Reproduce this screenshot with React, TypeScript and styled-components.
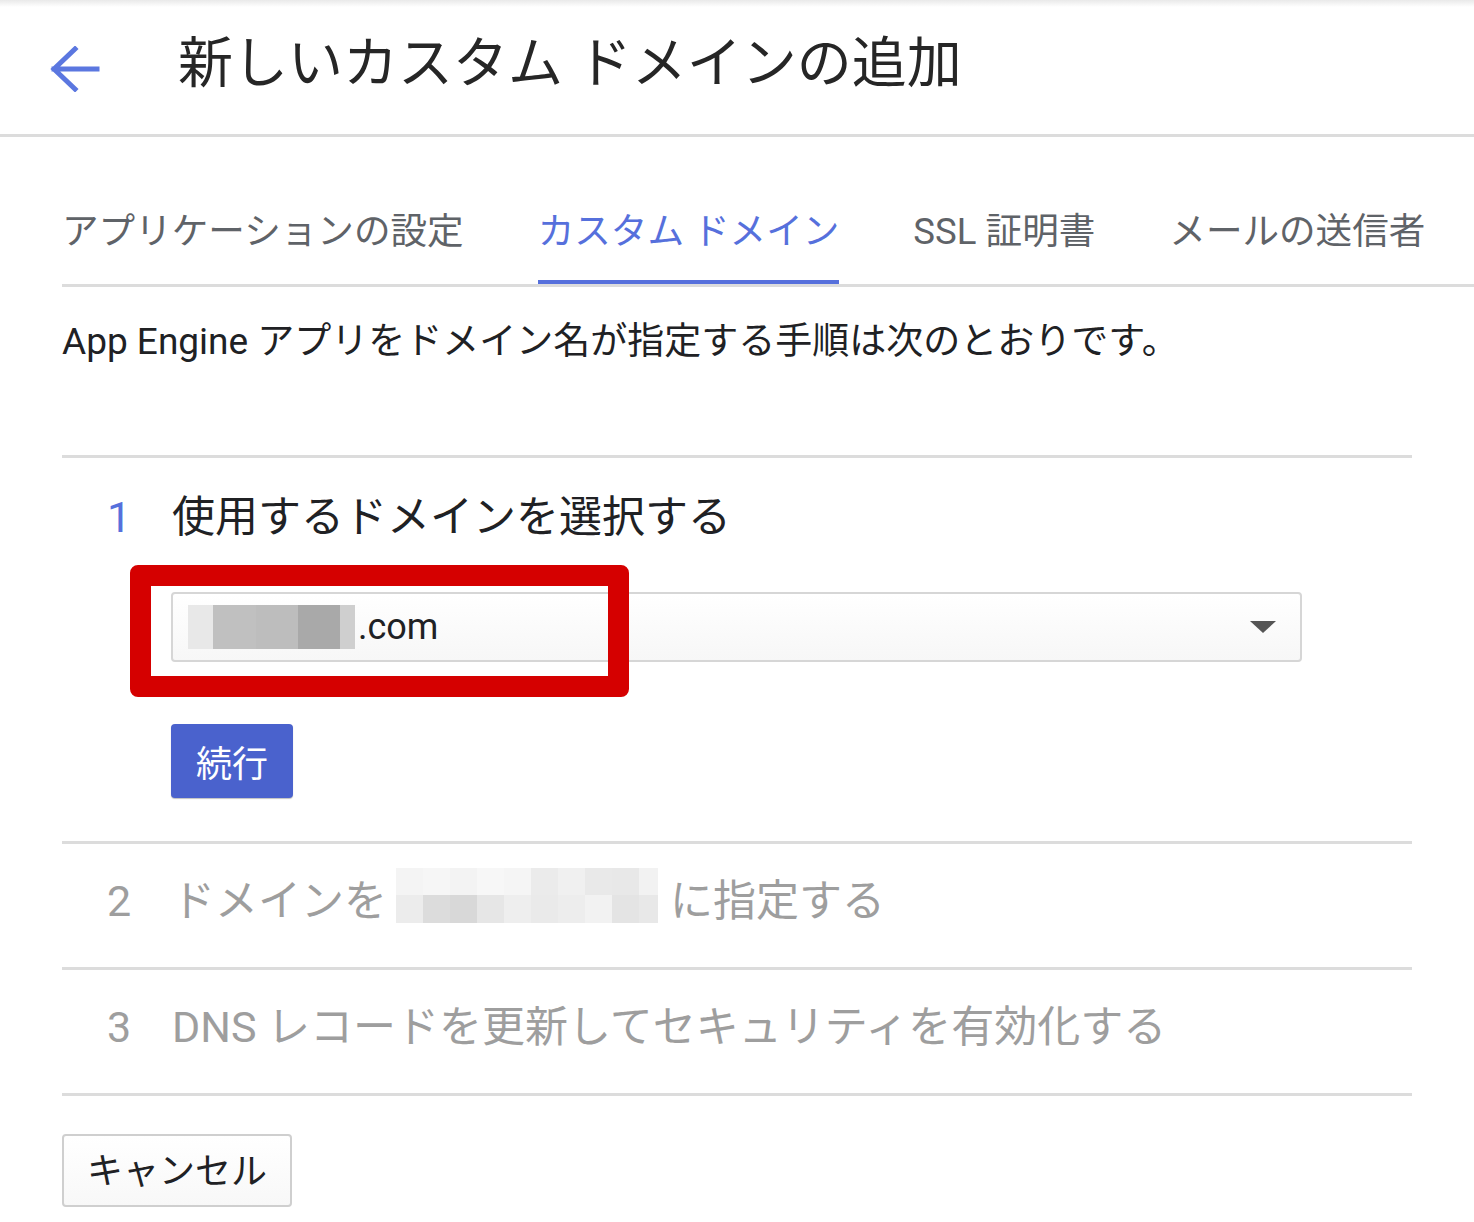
import styled, { createGlobalStyle } from "styled-components";

const GlobalStyle = createGlobalStyle`
  html, body {
    margin: 0;
    padding: 0;
    background: #ffffff;
  }
  body {
    font-family: Roboto, "Noto Sans CJK JP", sans-serif;
    color: #202124;
  }
`;

const Page = styled.div`
  width: 1474px;
  min-height: 1222px;
  overflow: hidden;
`;

// ヘッダー: 戻る矢印とタイトル
const Header = styled.header`
  height: 134px;
  display: flex;
  align-items: center;
  gap: 78px;
  padding-left: 50px;
  border-bottom: 3px solid #dcdcdc;
  background: linear-gradient(#e9e9e9 0px, #ffffff 7px);
`;

const BackButton = styled.button`
  display: flex;
  padding: 0;
  border: none;
  background: none;
  color: #5b77e0;
  margin-top: 4px;
`;

const Title = styled.h1`
  margin: 0 0 8px;
  font-size: 55px;
  font-weight: 400;
  line-height: 64px;
  color: #262626;
`;

// タブ
const Tabs = styled.nav`
  display: flex;
  margin: 71px 0 0 62px;
  border-bottom: 3px solid #dcdcdc;
`;

const Tab = styled.div<{ $active?: boolean }>`
  font-size: 36.6px;
  line-height: 48px;
  padding-bottom: 24px;
  margin-right: 74px;
  color: ${(p) => (p.$active ? "#5670dc" : "#5f6368")};
  border-bottom: 4px solid ${(p) => (p.$active ? "#5670dc" : "transparent")};
  white-space: nowrap;
`;

const Description = styled.p`
  margin: 31px 0 0 62px;
  font-size: 37px;
  line-height: 48px;
  color: #202124;
`;

// ステップ一覧
const Steps = styled.div`
  margin: 89px 62px 0 62px;
  border-bottom: 3px solid #dcdcdc;
`;

const Step = styled.section<{ $open?: boolean }>`
  border-top: 3px solid #dcdcdc;
  padding: ${(p) => (p.$open ? "31px 0 43px" : "29px 0 38px")};
`;

const StepHeader = styled.div<{ $muted?: boolean }>`
  display: flex;
  align-items: center;
  padding-left: 45px;
  font-size: 43px;
  line-height: 56px;
  color: ${(p) => (p.$muted ? "#9e9e9e" : "#202124")};
`;

const StepNumber = styled.span<{ $active?: boolean }>`
  width: 65px;
  flex: none;
  color: ${(p) => (p.$active ? "#5670dc" : "inherit")};
`;

const StepBody = styled.div`
  padding-left: 109px;
  margin-top: 47px;
`;

const SelectWrap = styled.div`
  position: relative;
  width: 1131px;
`;

const Select = styled.div`
  height: 66px;
  box-sizing: content-box;
  display: flex;
  align-items: center;
  padding: 0 24px 0 15px;
  border: 2px solid #d6d6d6;
  border-radius: 4px;
  background: linear-gradient(#ffffff, #f7f7f7);
`;

const SelectValue = styled.div`
  flex: 1;
  display: flex;
  align-items: center;
  font-size: 36px;
  color: #202124;
`;

const Caret = styled.span`
  width: 0;
  height: 0;
  border-left: 13px solid transparent;
  border-right: 13px solid transparent;
  border-top: 12px solid #555555;
`;

// 注釈の赤枠 (選択欄の上に重ねる)
const Highlight = styled.div`
  position: absolute;
  left: -41px;
  top: -27px;
  width: 499px;
  height: 132px;
  box-sizing: border-box;
  border: 21px solid #d50000;
  border-radius: 8px;
  pointer-events: none;
`;

// モザイク処理された部分
const Mosaic = styled.span<{ $cols: string; $underline?: boolean }>`
  display: inline-grid;
  grid-template-columns: ${(p) => p.$cols};
  grid-auto-rows: 1fr;
  box-shadow: ${(p) => (p.$underline ? "inset 0 -3px 0 #e07f7f" : "none")};
`;

const Cell = styled.span<{ $c: string }>`
  background: ${(p) => p.$c};
`;

const MosaicSelect = styled(Mosaic)`
  width: 167px;
  height: 44px;
  margin-right: 3px;
`;

const MosaicDomain = styled(Mosaic)`
  width: 262px;
  height: 55px;
  margin: -12px 12px 0 9px;
`;

const PrimaryButton = styled.button`
  margin-top: 62px;
  height: 74px;
  padding: 0 25px;
  border: none;
  border-radius: 4px;
  background: #4a62cd;
  color: #ffffff;
  font-family: inherit;
  font-size: 36px;
  box-shadow: 0 1px 1px rgba(0, 0, 0, 0.25);
`;

const CancelButton = styled.button`
  margin: 38px 0 0 62px;
  width: 230px;
  height: 73px;
  padding-bottom: 6px;
  border: 2px solid #cfcfcf;
  border-radius: 4px;
  background: linear-gradient(#ffffff, #f8f8f8);
  color: #202124;
  font-family: inherit;
  font-size: 36px;
`;

const selectCells = ["#e8e8e8", "#c0c0c0", "#bdbdbd", "#a9a9a9", "#cfcfcf"];
const domainTop = [
  "#f4f4f4", "#f6f6f6", "#f3f3f3", "#f7f7f7", "#f5f5f5",
  "#ebebeb", "#f0f0f0", "#e9e9e9", "#e8e8e8", "#f2f2f2",
];
const domainBottom = [
  "#ececec", "#dcdcdc", "#d8d8d8", "#e6e6e6", "#eeeeee",
  "#eaeaea", "#ededed", "#f2f2f2", "#e4e4e4", "#e8e8e8",
];

function BackArrow() {
  return (
    <svg width="50" height="46" viewBox="0 0 50 46" fill="none">
      <path
        d="M4 23H47M25 3L4 23L25 43"
        stroke="currentColor"
        strokeWidth="5"
        strokeLinecap="square"
      />
    </svg>
  );
}

export default function App() {
  return (
    <Page>
      <GlobalStyle />
      <Header>
        <BackButton aria-label="戻る">
          <BackArrow />
        </BackButton>
        <Title>新しいカスタム ドメインの追加</Title>
      </Header>

      <Tabs>
        <Tab>アプリケーションの設定</Tab>
        <Tab $active>カスタム ドメイン</Tab>
        <Tab>SSL 証明書</Tab>
        <Tab>メールの送信者</Tab>
      </Tabs>

      <Description>
        App Engine アプリをドメイン名が指定する手順は次のとおりです。
      </Description>

      <Steps>
        <Step $open>
          <StepHeader>
            <StepNumber $active>1</StepNumber>
            使用するドメインを選択する
          </StepHeader>
          <StepBody>
            <SelectWrap>
              <Select>
                <SelectValue>
                  <MosaicSelect $cols="25px 43px 42px 42px 15px" $underline>
                    {selectCells.map((c, i) => (
                      <Cell key={i} $c={c} />
                    ))}
                  </MosaicSelect>
                  .com
                </SelectValue>
                <Caret />
              </Select>
              <Highlight />
            </SelectWrap>
            <PrimaryButton>続行</PrimaryButton>
          </StepBody>
        </Step>

        <Step>
          <StepHeader $muted>
            <StepNumber>2</StepNumber>
            ドメインを
            <MosaicDomain $cols="repeat(9, 27px) 19px">
              {[...domainTop, ...domainBottom].map((c, i) => (
                <Cell key={i} $c={c} />
              ))}
            </MosaicDomain>
            に指定する
          </StepHeader>
        </Step>

        <Step>
          <StepHeader $muted>
            <StepNumber>3</StepNumber>
            DNS レコードを更新してセキュリティを有効化する
          </StepHeader>
        </Step>
      </Steps>

      <CancelButton>キャンセル</CancelButton>
    </Page>
  );
}
